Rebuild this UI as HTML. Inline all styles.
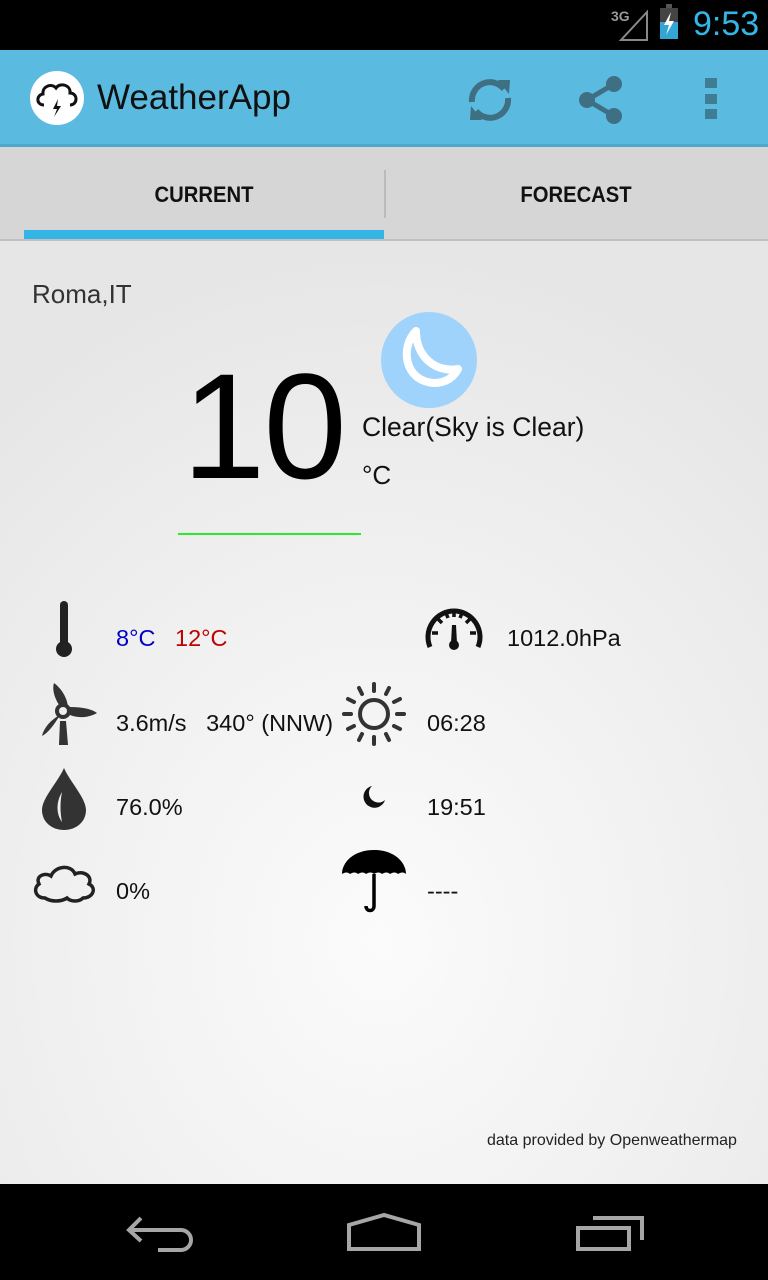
<!DOCTYPE html>
<html><head><meta charset="utf-8"><style>
*{margin:0;padding:0;box-sizing:border-box}
body{width:768px;height:1280px;overflow:hidden;font-family:"Liberation Sans",sans-serif;position:relative;background:#000}
.abs{position:absolute}
#status{left:0;top:0;width:768px;height:50px;background:#000}
#bar{left:0;top:50px;width:768px;height:94px;background:#5bbadf}
#barline{left:0;top:144px;width:768px;height:3px;background:#4ea9cc}
#tabs{left:0;top:147px;width:768px;height:94px;background:#d6d6d6}
#content{left:0;top:241px;width:768px;height:943px;background:radial-gradient(ellipse 600px 700px at 380px 700px,#fbfbfb 0%,#f0f0f0 55%,#e6e6e6 100%)}
#nav{left:0;top:1184px;width:768px;height:96px;background:#000}
.t{position:absolute;white-space:nowrap;color:#222}
.v{font-size:23.5px;color:#111}
</style></head><body>
<div id="status" class="abs">
<svg class="abs" style="left:600px;top:0" width="90" height="50">
<text x="11" y="21" font-size="14" font-weight="bold" fill="#999" font-family="Liberation Sans">3G</text>
<path d="M21 40 L47 40 L47 12 Z" fill="none" stroke="#888" stroke-width="2"/>
<rect x="66" y="4" width="6" height="4" fill="#555"/>
<rect x="60" y="8" width="18" height="31" fill="#444"/>
<rect x="60" y="22" width="18" height="17" fill="#33a6d3"/>
<path d="M71 12 L64 25 L69 25 L66 35 L74 21 L69 21 Z" fill="#fff"/>
</svg>
<div class="t" style="left:693px;top:5px;font-size:34px;color:#33b5e5">9:53</div>
</div>
<div id="bar" class="abs">
<div class="abs" style="left:30px;top:21px;width:54px;height:54px;border-radius:50%;background:#fff"></div>
<svg class="abs" style="left:30px;top:21px" width="54" height="54" viewBox="0 0 54 54">
<path d="M14 34 C6 34 6 24 13 23 C12 15 22 12 26 17 C30 11 41 14 40 22 C48 22 48 34 40 34" fill="none" stroke="#111" stroke-width="3"/>
<path d="M28 28 L23 38 L27 38 L24 46 L31 35 L27 35 Z" fill="#111"/>
</svg>
<div class="t" style="left:97px;top:28px;font-size:35px;color:#111">WeatherApp</div>
<svg class="abs" style="left:462px;top:22px" width="56" height="56" viewBox="0 0 56 56">
<g fill="none" stroke="#3f6f83" stroke-width="6"><path d="M10 30 A18 18 0 0 1 42 17"/><path d="M46 26 A18 18 0 0 1 14 39"/></g>
<path d="M36 8 L48 8 L47 22 Z" fill="#3f6f83"/><path d="M20 48 L8 48 L9 34 Z" fill="#3f6f83"/>
</svg>
<svg class="abs" style="left:574px;top:24px" width="54" height="52" viewBox="0 0 54 52">
<g fill="#3f6f83"><circle cx="40" cy="10" r="8"/><circle cx="13" cy="26" r="8"/><circle cx="40" cy="42" r="8"/></g>
<path d="M40 10 L13 26 L40 42" stroke="#3f6f83" stroke-width="5" fill="none"/>
</svg>
<div class="abs" style="left:705px;top:28px;width:12px;height:10px;background:#3f7d95"></div>
<div class="abs" style="left:705px;top:44px;width:12px;height:10px;background:#3f7d95"></div>
<div class="abs" style="left:705px;top:59px;width:12px;height:10px;background:#3f7d95"></div>
</div>
<div id="barline" class="abs"></div>
<div id="tabs" class="abs">
<div class="t" style="left:0;width:408px;text-align:center;top:35px;font-size:22px;font-weight:bold;color:#111;transform:scaleX(0.92)">CURRENT</div>
<div class="t" style="left:384px;width:384px;text-align:center;top:35px;font-size:22px;font-weight:bold;color:#111;transform:scaleX(0.92)">FORECAST</div>
<div class="abs" style="left:384px;top:23px;width:2px;height:48px;background:#bbb"></div>
<div class="abs" style="left:24px;top:83px;width:360px;height:11px;background:#33b5e5"></div>
<div class="abs" style="left:0;top:92px;width:768px;height:2px;background:#c0c0c0"></div>
</div>
<div id="content" class="abs">
<div class="t" style="left:32px;top:38px;font-size:26px;color:#333">Roma,IT</div>
<div class="t" style="left:182px;top:110px;font-size:150px;line-height:150px;color:#000;letter-spacing:-2px">10</div>
<div class="abs" style="left:178px;top:292px;width:183px;height:2px;background:#2ee82e"></div>
<svg class="abs" style="left:380px;top:70px" width="98" height="98" viewBox="0 0 98 98">
<circle cx="49" cy="49" r="48" fill="#9fd3fb"/>
<path d="M36 20 C20 36 24 70 54 72 C66 72 74 66 78 58 C56 62 36 46 36 20 Z" fill="none" stroke="#fff" stroke-width="8" stroke-linejoin="round"/>
</svg>
<div class="t" style="left:362px;top:171px;font-size:26.5px;color:#111">Clear(Sky is Clear)</div>
<div class="t" style="left:362px;top:219px;font-size:26px;color:#111">°C</div>

<svg class="abs" style="left:50px;top:360px" width="30" height="58"><rect x="10" y="0" width="8" height="46" rx="4" fill="#222"/><circle cx="14" cy="48" r="8" fill="#222"/></svg>
<div class="t v" style="left:116px;top:384px;color:#0000c8">8°C</div>
<div class="t v" style="left:175px;top:384px;color:#c00000">12°C</div>

<svg class="abs" style="left:40px;top:440px" width="60" height="66" viewBox="0 0 60 66">
<g fill="#333"><path d="M22 28 C14 18 12 8 14 2 C22 8 28 18 28 28 Z"/><path d="M30 26 C42 26 52 28 57 32 C50 36 40 38 30 34 Z"/><path d="M20 34 C14 44 8 52 2 55 C4 46 12 38 20 34 Z"/><path d="M20 40 L26 40 L28 64 L19 64 Z"/></g>
<circle cx="23" cy="30" r="8" fill="#333"/><circle cx="23" cy="30" r="4" fill="#eee"/></svg>
<div class="t v" style="left:116px;top:469px">3.6m/s&nbsp;&nbsp; 340° (NNW)</div>

<svg class="abs" style="left:40px;top:525px" width="48" height="66" viewBox="0 0 48 66"><path d="M24 2 C18 16 2 32 2 44 C2 56 12 64 24 64 C36 64 46 56 46 44 C46 32 30 16 24 2 Z" fill="#333"/><path d="M22 26 C16 36 16 48 22 56 C20 46 20 36 22 26 Z" fill="#eee"/></svg>
<div class="t v" style="left:116px;top:553px">76.0%</div>

<svg class="abs" style="left:31px;top:619px" width="66" height="44" viewBox="0 0 66 44"><path d="M14 38 C4 38 2 28 8 24 C4 16 14 12 20 16 C24 6 40 4 44 14 C52 10 62 16 58 24 C66 28 62 38 52 38 C48 42 40 42 36 38 C30 42 20 42 14 38 Z" fill="none" stroke="#222" stroke-width="3.5"/></svg>
<div class="t v" style="left:116px;top:637px">0%</div>

<svg class="abs" style="left:424px;top:362px" width="60" height="50" viewBox="0 0 60 50"><path d="M6 44 A26 26 0 1 1 54 44" fill="none" stroke="#111" stroke-width="5"/><g stroke="#111" stroke-width="3.5"><path d="M30 8 V14"/><path d="M14 16 L18 20"/><path d="M46 16 L42 20"/><path d="M8 30 H14"/><path d="M52 30 H46"/><path d="M22 10 L24 15"/><path d="M38 10 L36 15"/></g><path d="M28 22 L32 22 L33 40 L27 40 Z" fill="#111"/><circle cx="30" cy="42" r="5" fill="#111"/></svg>
<div class="t v" style="left:507px;top:384px">1012.0hPa</div>

<svg class="abs" style="left:341px;top:440px" width="66" height="66" viewBox="0 0 66 66"><circle cx="33" cy="33" r="14" fill="none" stroke="#333" stroke-width="4"/><g stroke="#333" stroke-width="4" stroke-linecap="round"><path d="M33 3 V10"/><path d="M33 56 V63"/><path d="M3 33 H10"/><path d="M56 33 H63"/><path d="M18 7 L21 13"/><path d="M48 7 L45 13"/><path d="M18 59 L21 53"/><path d="M48 59 L45 53"/><path d="M7 18 L13 21"/><path d="M59 18 L53 21"/><path d="M7 48 L13 45"/><path d="M59 48 L53 45"/></g></svg>
<div class="t v" style="left:427px;top:469px">06:28</div>

<svg class="abs" style="left:360px;top:542px" width="28" height="28" viewBox="0 0 28 28"><path d="M12 3 A11 11 0 1 0 25 17 A8 8 0 0 1 12 3 Z" fill="#111"/></svg>
<div class="t v" style="left:427px;top:553px">19:51</div>

<svg class="abs" style="left:340px;top:607px" width="68" height="66" viewBox="0 0 68 66"><path d="M34 2 C14 2 2 14 2 26 C5 24 8 24 10 26 C13 24 16 24 18 26 C21 24 24 24 26 26 C29 24 32 24 34 26 C37 24 40 24 42 26 C45 24 48 24 50 26 C53 24 56 24 58 26 C61 24 64 24 66 26 C66 14 54 2 34 2 Z" fill="#000"/><path d="M34 26 V58 C34 64 26 64 26 58" fill="none" stroke="#000" stroke-width="3.5"/></svg>
<div class="t v" style="left:427px;top:637px">----</div>

<div class="t" style="left:487px;top:891px;font-size:16px;color:#222">data provided by Openweathermap</div>
</div>
<div id="nav" class="abs">
<svg class="abs" style="left:0;top:0" width="768" height="96" viewBox="0 0 768 96">
<g fill="none" stroke="#a6a6a6" stroke-width="4">
<path d="M141 34 L129 46 L141 57"/><path d="M129 46 H181 A10 10 0 0 1 181 66 H158"/>
<path d="M349 65 V41 L384 31 L419 41 V65 Z"/>
<path d="M578 44 H629 V65 H578 Z"/><path d="M593 34 H642 V56"/>
</g></svg>
</div>
</body></html>
